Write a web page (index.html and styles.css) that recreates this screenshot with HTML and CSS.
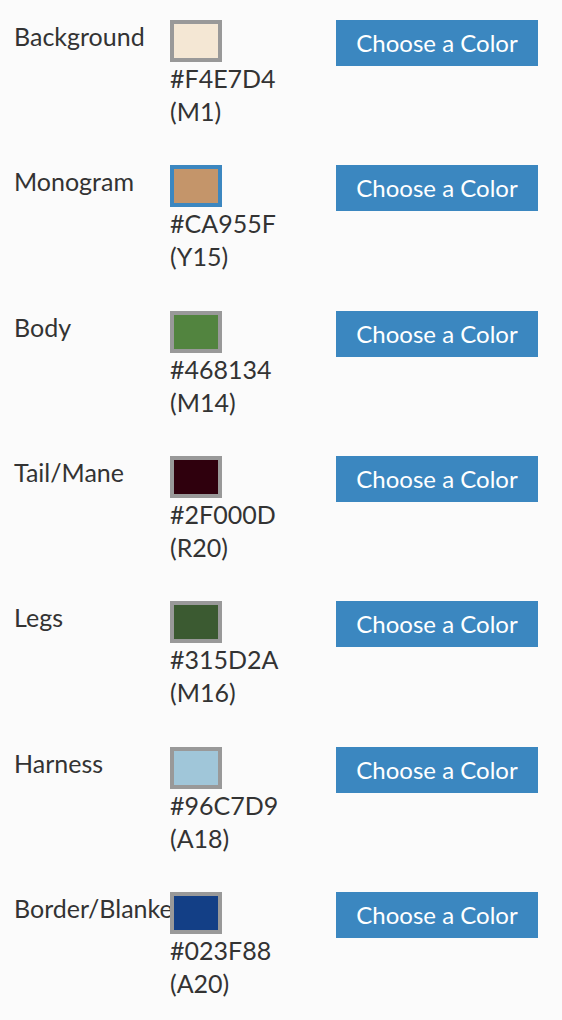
FILE: index.html
```html
<!DOCTYPE html>
<html lang="en">
<head>
<meta charset="utf-8">
<title>Colors</title>
<link rel="stylesheet" href="styles.css">
</head>
<body>
<div class="list">
  <div class="row">
    <div class="label">Background</div>
    <div class="swatch-col">
      <div class="swatch" style="background:#F4E7D4"></div>
      <div class="code">#F4E7D4</div>
      <div class="code">(M1)</div>
    </div>
    <button class="btn">Choose a Color</button>
  </div>
  <div class="row">
    <div class="label">Monogram</div>
    <div class="swatch-col">
      <div class="swatch selected" style="background:#C4956A"></div>
      <div class="code">#CA955F</div>
      <div class="code">(Y15)</div>
    </div>
    <button class="btn">Choose a Color</button>
  </div>
  <div class="row">
    <div class="label">Body</div>
    <div class="swatch-col">
      <div class="swatch" style="background:#52843F"></div>
      <div class="code">#468134</div>
      <div class="code">(M14)</div>
    </div>
    <button class="btn">Choose a Color</button>
  </div>
  <div class="row">
    <div class="label">Tail/Mane</div>
    <div class="swatch-col">
      <div class="swatch" style="background:#2F000D"></div>
      <div class="code">#2F000D</div>
      <div class="code">(R20)</div>
    </div>
    <button class="btn">Choose a Color</button>
  </div>
  <div class="row">
    <div class="label">Legs</div>
    <div class="swatch-col">
      <div class="swatch" style="background:#3B5A31"></div>
      <div class="code">#315D2A</div>
      <div class="code">(M16)</div>
    </div>
    <button class="btn">Choose a Color</button>
  </div>
  <div class="row">
    <div class="label">Harness</div>
    <div class="swatch-col">
      <div class="swatch" style="background:#A0C6D9"></div>
      <div class="code">#96C7D9</div>
      <div class="code">(A18)</div>
    </div>
    <button class="btn">Choose a Color</button>
  </div>
  <div class="row">
    <div class="label">Border/Blanket</div>
    <div class="swatch-col">
      <div class="swatch" style="background:#133F86"></div>
      <div class="code">#023F88</div>
      <div class="code">(A20)</div>
    </div>
    <button class="btn">Choose a Color</button>
  </div>
</div>
</body>
</html>
```

FILE: styles.css
```css
html, body {
  margin: 0;
  padding: 0;
  background: #fbfbfb;
}
body {
  font-family: Lato, "Liberation Sans", sans-serif;
  color: #333333;
  font-size: 25px;
  line-height: 33px;
}
.list {
  padding: 20px 24px 0 14px;
  display: flex;
  flex-direction: column;
  gap: 37.33px;
}
.row {
  display: flex;
  align-items: flex-start;
}
.label {
  width: 156px;
  flex: none;
  white-space: nowrap;
  overflow: visible;
}
.swatch-col {
  width: 166px;
  flex: none;
}
.swatch {
  box-sizing: border-box;
  width: 52px;
  height: 42px;
  border: 4px solid #999999;
}
.swatch.selected {
  border-color: #3c87c0;
}
.code {
  line-height: 33px;
}
.btn {
  flex: none;
  width: 202px;
  height: 46px;
  margin: 0;
  padding: 0;
  border: none;
  background: #3b87c0;
  color: #ffffff;
  font-family: Lato, "Liberation Sans", sans-serif;
  font-size: 24px;
  line-height: 46px;
  text-align: center;
  cursor: pointer;
}
```
